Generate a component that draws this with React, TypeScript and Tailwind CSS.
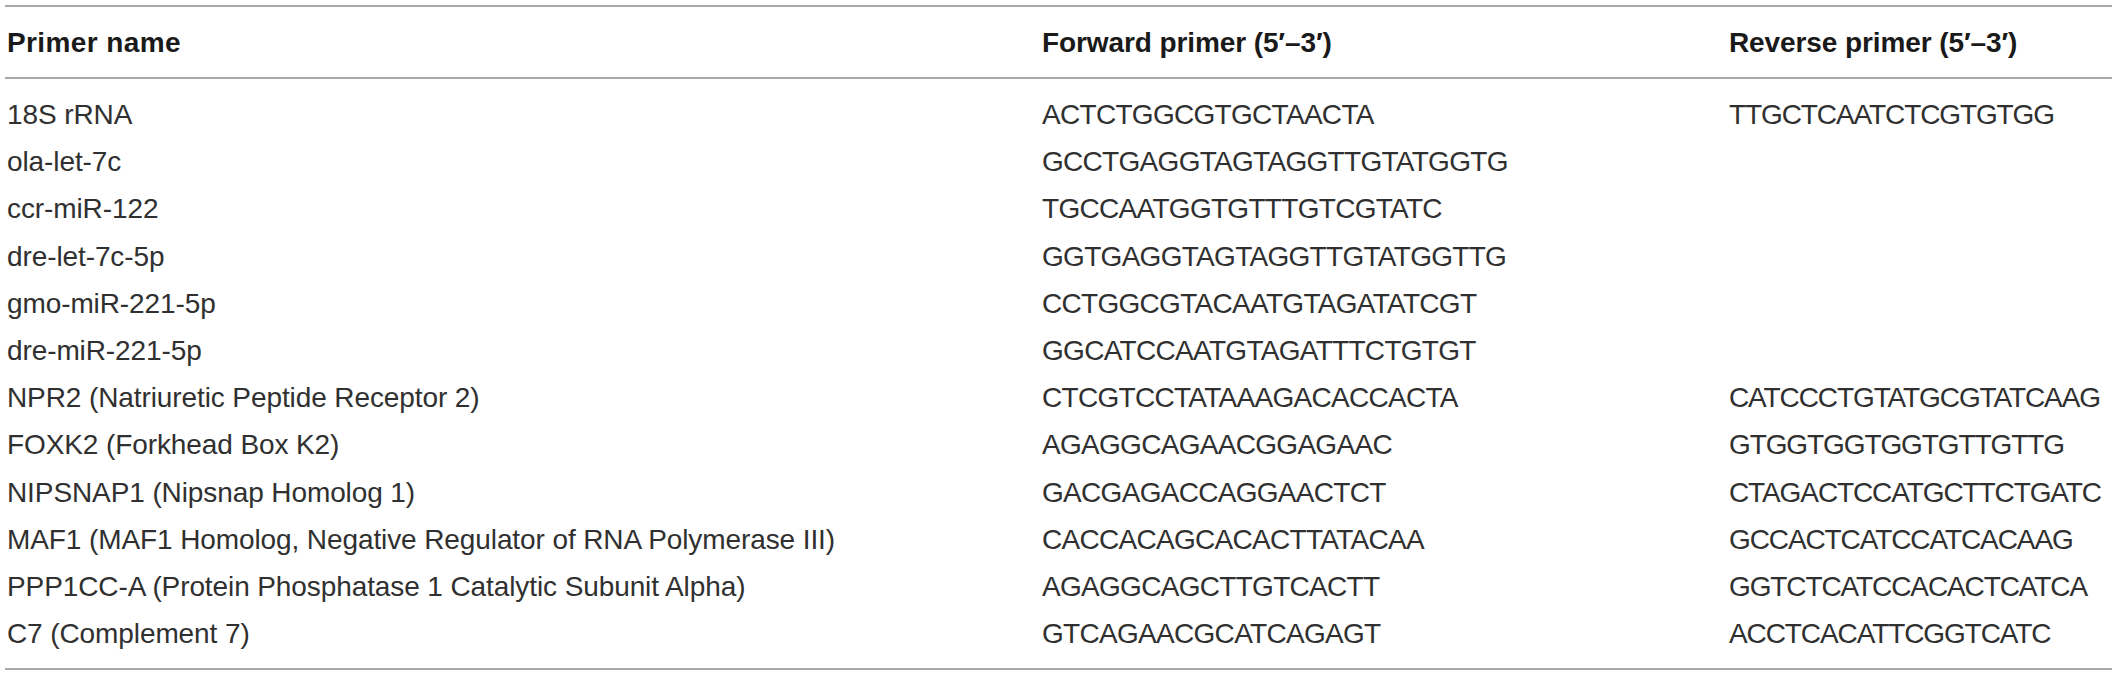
import React from 'react';

interface PrimerRow {
  name: string;
  forward: string;
  reverse?: string;
}

const rows: PrimerRow[] = [
  { name: '18S rRNA', forward: 'ACTCTGGCGTGCTAACTA', reverse: 'TTGCTCAATCTCGTGTGG' },
  { name: 'ola-let-7c', forward: 'GCCTGAGGTAGTAGGTTGTATGGTG' },
  { name: 'ccr-miR-122', forward: 'TGCCAATGGTGTTTGTCGTATC' },
  { name: 'dre-let-7c-5p', forward: 'GGTGAGGTAGTAGGTTGTATGGTTG' },
  { name: 'gmo-miR-221-5p', forward: 'CCTGGCGTACAATGTAGATATCGT' },
  { name: 'dre-miR-221-5p', forward: 'GGCATCCAATGTAGATTTCTGTGT' },
  { name: 'NPR2 (Natriuretic Peptide Receptor 2)', forward: 'CTCGTCCTATAAAGACACCACTA', reverse: 'CATCCCTGTATGCGTATCAAG' },
  { name: 'FOXK2 (Forkhead Box K2)', forward: 'AGAGGCAGAACGGAGAAC', reverse: 'GTGGTGGTGGTGTTGTTG' },
  { name: 'NIPSNAP1 (Nipsnap Homolog 1)', forward: 'GACGAGACCAGGAACTCT', reverse: 'CTAGACTCCATGCTTCTGATC' },
  { name: 'MAF1 (MAF1 Homolog, Negative Regulator of RNA Polymerase III)', forward: 'CACCACAGCACACTTATACAA', reverse: 'GCCACTCATCCATCACAAG' },
  { name: 'PPP1CC-A (Protein Phosphatase 1 Catalytic Subunit Alpha)', forward: 'AGAGGCAGCTTGTCACTT', reverse: 'GGTCTCATCCACACTCATCA' },
  { name: 'C7 (Complement 7)', forward: 'GTCAGAACGCATCAGAGT', reverse: 'ACCTCACATTCGGTCATC' },
];

export default function App() {
  return (
    <div className="min-h-screen bg-white pt-[5px] font-['Liberation_Sans',Arial,sans-serif]">
      <div className="ml-[5px] w-[2107px] border-y-2 border-[#a9a9a9]">
        {/* Header */}
        <div className="grid grid-cols-[1035px_687px_1fr] border-b-2 border-[#a9a9a9] pl-[2px] pt-[12px] pb-[11px] text-[28px] leading-[47px] font-bold text-[#1a1a1a]">
          <div className="tracking-[0.4px]">Primer name</div>
          <div className="tracking-[-0.1px]">Forward primer (5′–3′)</div>
          <div className="tracking-[-0.1px]">Reverse primer (5′–3′)</div>
        </div>

        {/* Body */}
        <div className="pl-[2px] pt-[12px] pb-[11px] text-[28px] leading-[47.2px] text-[#303030]">
          {rows.map((row, i) => (
            <div key={i} className="grid grid-cols-[1035px_687px_1fr]">
              <div className="tracking-[-0.1px]">{row.name}</div>
              <div className="tracking-[-0.7px]">{row.forward}</div>
              <div className="tracking-[-1.1px]">{row.reverse ?? ''}</div>
            </div>
          ))}
        </div>
      </div>
    </div>
  );
}
